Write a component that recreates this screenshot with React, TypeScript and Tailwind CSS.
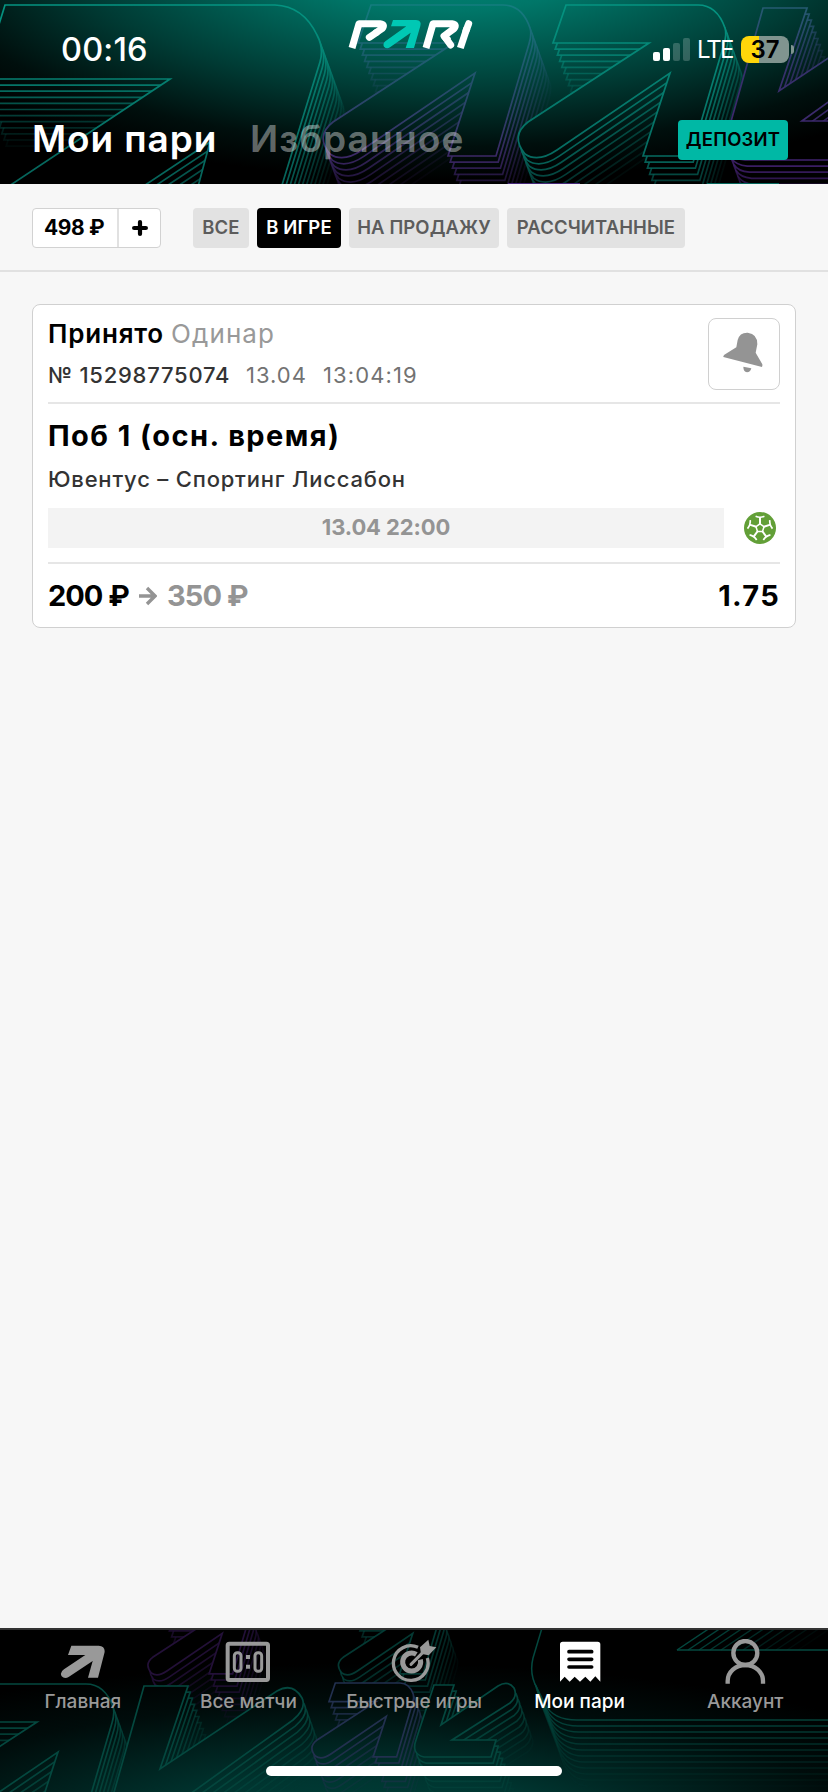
import type { ReactNode } from 'react';

type Seg = [string, ...number[]];

// Outline of the brand arrow, the "K" letter and the turned arrow
const ARROW: Seg[] = [
  ['M', 566, 5], ['L', 698, 5], ['Q', 717, 5, 725, 28], ['Q', 727, 34, 724, 44],
  ['L', 691, 156], ['L', 643, 156], ['L', 670, 73], ['L', 557, 150],
  ['Q', 538, 163, 525, 154], ['Q', 510, 136, 528, 122], ['L', 649, 43], ['L', 553, 43], ['Z'],
];
const BIG_ARROW: Seg[] = [
  ['M', 5, 5], ['L', 275, 5], ['Q', 303, 6, 317, 35], ['Q', 324, 48, 320, 62],
  ['L', 270, 224], ['L', 188, 224], ['L', 210, 142], ['L', 100, 215],
  ['L', -30, 212], ['L', 170, 79], ['L', -18, 79], ['Z'],
];
const LETTER_K: Seg[] = [
  ['M', 763, 8], ['L', 807, 8], ['L', 779, 91], ['L', 896, 13], ['Q', 912, 4, 921, 20], ['Q', 926, 30, 912, 42],
  ['L', 802, 121], ['L', 900, 121], ['L', 886, 160], ['L', 745, 160], ['Q', 722, 158, 728, 132], ['Z'],
];
const TURNED: Seg[] = [
  ['M', 434, 57], ['L', 454, 57], ['L', 441, 97], ['L', 498, 58], ['Q', 508, 52, 514, 60], ['Q', 518, 68, 510, 75],
  ['L', 452, 112], ['L', 496, 112], ['L', 491, 129], ['L', 424, 129], ['Q', 411, 126, 416, 112], ['Z'],
];

const toPath = (shape: Seg[], dx: number, dy: number, scale: number) =>
  shape
    .map(([cmd, ...n]) => cmd + n.map((v, i) => (v * scale + (i % 2 ? dy : dx)).toFixed(1)).join(' '))
    .join(' ');

interface EchoProps {
  shape: Seg[];
  color: string;
  fill: string;
  x?: number;
  y?: number;
  scale?: number;
  count?: number;
  opacity?: number;
}

// One shape with fading copies behind it
function Echo({ shape, color, fill, x = 0, y = 0, scale = 1, count = 10, opacity = 1 }: EchoProps) {
  const steps = Array.from({ length: count }, (_, i) => count - 1 - i);
  return (
    <g fill={fill} stroke={color} strokeWidth="1.7">
      {steps.map((i) => (
        <path
          key={i}
          d={toPath(shape, x + i * 2.2, y + i * 6.1, scale)}
          strokeOpacity={opacity * (1 - i / count)}
        />
      ))}
    </g>
  );
}

function HeaderPattern() {
  return (
    <svg className="absolute inset-0" width="828" height="184" viewBox="0 0 828 184">
      <defs>
        <radialGradient id="head" gradientUnits="userSpaceOnUse" cx="0" cy="0" r="1" gradientTransform="translate(450 -45) scale(620 225)">
          <stop offset="0" stopColor="#008a7a" />
          <stop offset="0.25" stopColor="#007668" />
          <stop offset="0.6" stopColor="#003c35" />
          <stop offset="0.85" stopColor="#000f0d" />
          <stop offset="1" stopColor="#000" />
        </radialGradient>
        <linearGradient id="violet" gradientUnits="userSpaceOnUse" x1="0" y1="0" x2="0" y2="184">
          <stop offset="0" stopColor="#137f80" />
          <stop offset="0.45" stopColor="#244f6b" />
          <stop offset="0.85" stopColor="#3c2866" />
          <stop offset="1" stopColor="#321c58" />
        </linearGradient>
        <linearGradient id="violet2" gradientUnits="userSpaceOnUse" x1="0" y1="0" x2="0" y2="184">
          <stop offset="0" stopColor="#235f72" />
          <stop offset="0.4" stopColor="#37306c" />
          <stop offset="1" stopColor="#421e6e" />
        </linearGradient>
        <linearGradient id="mint" gradientUnits="userSpaceOnUse" x1="0" y1="0" x2="0" y2="184">
          <stop offset="0" stopColor="#049582" />
          <stop offset="1" stopColor="#06635a" />
        </linearGradient>
      </defs>
      <rect width="828" height="184" fill="url(#head)" />
      <Echo shape={BIG_ARROW} color="url(#mint)" fill="url(#head)" count={12} />
      <Echo shape={ARROW} color="url(#violet)" fill="url(#head)" x={-195} />
      <Echo shape={ARROW} color="url(#mint)" fill="url(#head)" />
      <Echo shape={LETTER_K} color="url(#violet2)" fill="url(#head)" />
      <path d="M508 183.500H580" stroke="#46287a" />
      <path d="M707 183.500H779" stroke="#06685d" />
    </svg>
  );
}

function FooterPattern() {
  const rows = Array.from({ length: 12 }, (_, i) => i);
  return (
    <svg className="absolute inset-0" width="828" height="164" viewBox="0 0 828 164">
      <defs>
        <radialGradient id="foot" gradientUnits="userSpaceOnUse" cx="0" cy="0" r="1" gradientTransform="translate(370 195) scale(640 160)">
          <stop offset="0" stopColor="#003f39" />
          <stop offset="0.3" stopColor="#003530" />
          <stop offset="0.75" stopColor="#000c0b" />
          <stop offset="1" stopColor="#000" />
        </radialGradient>
      </defs>
      <rect width="828" height="164" fill="url(#foot)" />
      <Echo shape={ARROW} color="#231038" fill="url(#foot)" scale={0.49} x={-106} y={-30.5} count={9} />
      <Echo shape={ARROW} color="#05463f" fill="url(#foot)" scale={0.49} x={84.5} y={-30.5} count={9} opacity={0.8} />
      <Echo shape={ARROW} color="#04483f" fill="url(#foot)" x={-612} y={51} />
      <Echo shape={LETTER_K} color="#04483f" fill="url(#foot)" x={-619} y={50} />
      <Echo shape={ARROW} color="#22304f" fill="url(#foot)" scale={0.49} x={58} y={52.5} count={8} />
      <Echo shape={TURNED} color="#04483f" fill="url(#foot)" count={9} />
      <g fill="none" stroke="#04483f" strokeWidth="1.5">
        <path d="M542 0L533 30Q529 46 537 60" />
        {rows.map((i) => (
          <path
            key={i}
            d={`M${535 + i * 0.6} ${56 + i * 2} L${545 + i * 1.5} ${76 + i * 5} Q${553 + i * 1.5} ${92 + i * 6} ${577 + i} ${92 + i * 6} H828`}
            strokeOpacity={(1 - i / 12) * 0.9}
          />
        ))}
        {rows.map((i) => (
          <path key={i} d={`M${677 + i * 11} 22l33 -22`} strokeOpacity={1 - i / 12} />
        ))}
        <path d="M677 22H828" />
      </g>
    </svg>
  );
}

function Logo() {
  return (
    <svg width="140" height="50" viewBox="0 0 420 150" fill="none" strokeWidth="21" strokeLinejoin="round">
      <g stroke="#fff">
        <path d="M36 114L57 41H120Q137 43 126 56L105 70" />
        <path d="M110 67L88 82" strokeLinecap="round" />
        <path d="M258 114L279 41H336Q352 43 342 56L312 78L326 92" />
        <path d="M314 80L332 105" strokeLinecap="round" />
        <path d="M361 114L381 54" />
        <path d="M378 62L386 41" strokeLinecap="round" />
      </g>
      <path d="M159 30H228Q246 31 241 48L222 114H197L212 68L150 112Q140 118 132 110Q127 101 137 93L199 49H153Z" fill="#00c8b4" />
    </svg>
  );
}

function StatusBar() {
  return (
    <div className="flex h-[72px] items-start pl-[61px]">
      <div className="mt-[30px] w-[279px] text-[32.5px] leading-10 font-medium tracking-[0.2px]">00:16</div>
      <div className="mt-[10px] w-[313px]">
        <Logo />
      </div>
      <div className="mt-[36px] flex h-[27px] items-center">
        <div className="flex h-[23px] items-end gap-[3px]">
          <i className="h-[9px] w-[7px] rounded-[2px] bg-white" />
          <i className="h-[13px] w-[7px] rounded-[2px] bg-white" />
          <i className="h-[18px] w-[7px] rounded-[2px] bg-white/20" />
          <i className="h-[23px] w-[7px] rounded-[2px] bg-white/20" />
        </div>
        <span className="ml-[7px] w-[44px] text-[24px] leading-none tracking-[-1.9px]">LTE</span>
        <div className="flex h-[27px] w-[48px] items-center justify-center rounded-[8px] bg-linear-to-r from-[#ffd60a] from-[37%] to-[#80948f] to-[37%] text-[24px] font-semibold text-black">
          37
        </div>
        <i className="ml-[2px] h-[9px] w-[3px] rounded-r-full bg-[#80948f]" />
      </div>
    </div>
  );
}

function Header() {
  return (
    <header className="relative h-[184px] overflow-hidden bg-black text-white">
      <HeaderPattern />
      <div className="relative">
        <StatusBar />
        <div className="mt-[37px] flex h-[60px] items-center pr-10 pl-[32px] text-[37px] font-semibold">
          <span className="w-[218px] tracking-[0.9px]">Мои пари</span>
          <span className="tracking-[1.2px] text-white/40">Избранное</span>
          <button className="mt-[2px] ml-auto h-10 w-[110px] rounded-[4px] bg-[#00b8a5] text-[18.5px] font-semibold tracking-[0.2px] text-black">
            ДЕПОЗИТ
          </button>
        </div>
      </div>
    </header>
  );
}

const filters = [
  { label: 'ВСЕ', width: 'w-[56px]' },
  { label: 'В ИГРЕ', width: 'w-[84px]', active: true },
  { label: 'НА ПРОДАЖУ', width: 'w-[150px]' },
  { label: 'РАССЧИТАННЫЕ', width: 'w-[178px]' },
];

function Filters() {
  return (
    <div className="flex h-[88px] items-center border-b-2 border-[#e1e1e1] px-8 pt-[2px]">
      <div className="flex h-10 w-[129px] rounded-[4px] border border-[#d2d2d2] bg-white">
        <span className="flex w-[86px] items-center border-r-2 border-[#e1e1e1] pl-[11px] text-[21px] font-bold tracking-[-0.4px]">
          498 ₽
        </span>
        <svg className="m-auto" width="16" height="16" viewBox="0 0 16 16" stroke="#000" strokeWidth="4.2" strokeLinecap="round">
          <path d="M8 2.1v11.8M2.1 8h11.8" />
        </svg>
      </div>
      <div className="ml-8 flex gap-2">
        {filters.map((f) => (
          <button
            key={f.label}
            className={`h-10 rounded-[4px] text-[18.5px] font-semibold tracking-[0.1px] whitespace-nowrap ${f.width} ${f.active ? 'bg-black text-white' : 'bg-[#e2e2e2] text-[#5c5c5c]'}`}
          >
            {f.label}
          </button>
        ))}
      </div>
    </div>
  );
}

function BellIcon() {
  return (
    <svg width="40" height="42" viewBox="0 0 120 126" fill="#949494">
      <path d="M1 75Q0 72 4 68L40 46L44 24Q50 1 74 2Q104 6 103 37L98 62L118 97Q119 101 117 105Z" />
      <path d="M61 104L85 109Q82 121 72 121Q61 119 61 104Z" />
    </svg>
  );
}

function BallIcon() {
  const turns = [0, 72, 144, 216, 288];
  return (
    <svg width="32" height="32" viewBox="0 0 32 32">
      <circle cx="16" cy="16" r="16" fill="#629f37" />
      <g fill="none" stroke="#fff">
        <path d="M16 11.8L20 14.7L18.5 19.4H13.5L12 14.7Z" strokeWidth="1.5" />
        {turns.map((t) => (
          <g key={t} transform={`rotate(${t} 16 16)`}>
            <path d="M16 12V5" strokeWidth="2" />
            <path d="M11.6 4.3Q16 6.200 20.4 4.3" strokeWidth="1.7" />
          </g>
        ))}
      </g>
    </svg>
  );
}

function BetCard() {
  return (
    <article className="mx-8 mt-8 h-[324px] rounded-[8px] border border-[#d0d0d0] bg-white px-[15px]">
      <div className="flex h-[99px] justify-between border-b-2 border-[#e6e6e6]">
        <div className="pt-[9px]">
          <div className="h-10 text-[26px] leading-10 font-semibold">
            <span className="inline-block w-[123px] tracking-[0.8px]">Принято</span>
            <span className="font-normal tracking-[1.1px] text-[#999]">Одинар</span>
          </div>
          <div className="mt-[1px] flex h-10 text-[22px] leading-10 text-[#727272]">
            <span className="w-[198px] font-medium tracking-[0.75px] text-[#333]">№ 15298775074</span>
            <span className="w-[77px] tracking-[1px]">13.04</span>
            <span className="tracking-[1.1px]">13:04:19</span>
          </div>
        </div>
        <button className="mt-[13px] flex size-[72px] items-center justify-center rounded-[8px] border border-[#d0d0d0] pr-[2px] pb-[2px]">
          <BellIcon />
        </button>
      </div>
      <div className="border-b-2 border-[#e6e6e6]">
        <h2 className="pt-[12px] text-[29px] leading-10 font-bold tracking-[1.45px]">Поб 1 (осн. время)</h2>
        <p className="mt-[3px] text-[22px] leading-10 font-medium tracking-[0.8px] text-[#333]">Ювентус – Спортинг Лиссабон</p>
        <div className="mt-[9px] mb-[14px] flex items-center justify-between">
          <div className="h-10 w-[676px] bg-[#f3f3f3] text-center text-[22px] leading-[39px] font-bold tracking-[-0.1px] text-[#949494]">
            13.04 22:00
          </div>
          <div className="mr-1">
            <BallIcon />
          </div>
        </div>
      </div>
      <div className="flex h-[63px] items-center text-[29px] font-bold">
        <span className="w-[91px] tracking-[-1px]">200 ₽</span>
        <svg width="18" height="20" viewBox="0 0 18 20" fill="none" stroke="#949494" strokeWidth="3.4">
          <path d="M0 10H16M8 2L16 10L8 18" />
        </svg>
        <span className="ml-[10px] tracking-[-0.9px] text-[#949494]">350 ₽</span>
        <span className="ml-auto tracking-[1.3px]">1.75</span>
      </div>
    </article>
  );
}

function TabIcon({ children }: { children: ReactNode }) {
  return (
    <svg width="46" height="46" viewBox="0 0 138 138" fill="currentColor">
      {children}
    </svg>
  );
}

const tabs = [
  {
    label: 'Главная',
    icon: <path d="M34 20H116Q138 22 133 43L114 116H84L98 66L27 113Q14 121 5 112Q-2 100 12 91L76 48H24Z" />,
  },
  {
    label: 'Все матчи',
    icon: (
      <g fill="none" stroke="currentColor">
        <rect x="8" y="14" width="121" height="109" rx="5" strokeWidth="12" />
        <rect x="28" y="41" width="20" height="56" rx="9" strokeWidth="9" />
        <rect x="90" y="41" width="20" height="56" rx="9" strokeWidth="9" />
        <path d="M63 54H75M63 83H75" strokeWidth="12" />
      </g>
    ),
  },
  {
    label: 'Быстрые игры',
    icon: (
      <g>
        <path d="M81 25A52 52 0 1 0 109 57" fill="none" stroke="currentColor" strokeWidth="10" />
        <path d="M76 46A27 27 0 1 0 88 62" fill="none" stroke="currentColor" strokeWidth="15" />
        <path d="M60 76L104 32" stroke="currentColor" strokeWidth="9" strokeLinecap="round" />
        <path d="M90 45L87 25L112 2L116 21L136 25L113 49L97 46Z" />
      </g>
    ),
  },
  {
    label: 'Мои пари',
    active: true,
    icon: (
      <g>
        <path d="M17 8H122Q130 8 130 16V128L115 112L100 128L85 113L69 128L53 113L38 128L23 113L9 128V16Q9 8 17 8Z" />
        <path d="M36 38H104M36 61H104M36 84H104" stroke="#000" strokeWidth="11" strokeLinecap="round" />
      </g>
    ),
  },
  {
    label: 'Аккаунт',
    icon: (
      <g fill="none" stroke="currentColor" strokeWidth="13">
        <circle cx="70" cy="42" r="36" />
        <path d="M17 134V126A53 48 0 0 1 123 126V134" />
      </g>
    ),
  },
];

function TabBar() {
  return (
    <footer className="relative h-[164px] overflow-hidden bg-black">
      <FooterPattern />
      <div className="relative h-full border-t-2 border-[#333]">
        <nav className="grid h-[136px] grid-cols-5">
          {tabs.map((tab) => (
            <div key={tab.label} className={`flex flex-col items-center pt-[9px] ${tab.active ? 'text-white' : 'text-[#999]'}`}>
              <TabIcon>{tab.icon}</TabIcon>
              <span className="mt-[7px] text-[19px] leading-5 font-medium">{tab.label}</span>
            </div>
          ))}
        </nav>
        <div className="mx-auto h-[10px] w-[296px] rounded-full bg-white" />
      </div>
    </footer>
  );
}

function App() {
  return (
    <div className="flex h-[1792px] w-[828px] flex-col bg-[#f7f7f7] font-['Inter','Noto_Sans',sans-serif] text-black">
      <Header />
      <Filters />
      <main className="flex-1">
        <BetCard />
      </main>
      <TabBar />
    </div>
  );
}

export default App;
